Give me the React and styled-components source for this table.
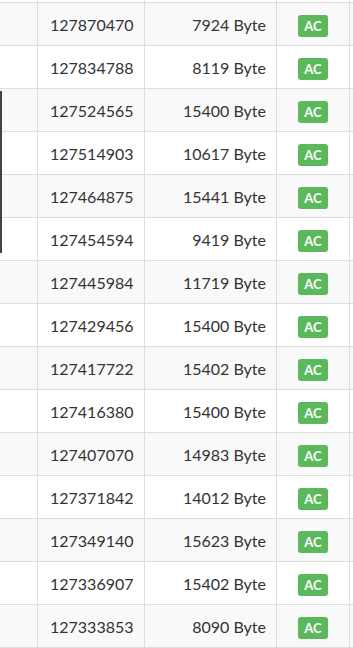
import styled, { createGlobalStyle } from "styled-components";

const GlobalStyle = createGlobalStyle`
  html, body {
    margin: 0;
    padding: 0;
    background: #fff;
  }
  body {
    font-family: Lato, "Open Sans", "Liberation Sans", sans-serif;
    color: #333;
  }
`;

const submissions = [
  null,
  { id: "127870470", size: "7924" },
  { id: "127834788", size: "8119" },
  { id: "127524565", size: "15400" },
  { id: "127514903", size: "10617" },
  { id: "127464875", size: "15441" },
  { id: "127454594", size: "9419" },
  { id: "127445984", size: "11719" },
  { id: "127429456", size: "15400" },
  { id: "127417722", size: "15402" },
  { id: "127416380", size: "15400" },
  { id: "127407070", size: "14983" },
  { id: "127371842", size: "14012" },
  { id: "127349140", size: "15623" },
  { id: "127336907", size: "15402" },
  { id: "127333853", size: "8090" },
];

export default function App() {
  return (
    <Page>
      <GlobalStyle />
      <Table>
        {submissions.map((s, i) => (
          <Row key={i} $striped={i % 2 === 1} $clipped={i === 0}>
            <Cell />
            <IdCell>{s && s.id}</IdCell>
            <SizeCell>{s && `${s.size} Byte`}</SizeCell>
            <StatusCell>{s && <Badge>AC</Badge>}</StatusCell>
            <Cell $bordered />
          </Row>
        ))}
      </Table>
      <ScrollEdge />
    </Page>
  );
}

const Page = styled.div`
  position: relative;
  width: 353px;
  height: 648px;
  overflow: hidden;
`;

const Table = styled.div`
  display: flex;
  flex-direction: column;
`;

const Row = styled.div`
  display: grid;
  grid-template-columns: 37px 107px 132px 73px 1fr;
  height: 43px;
  box-sizing: border-box;
  border-bottom: 1px solid #ddd;
  background: ${(p) => (p.$striped ? "#f9f9f9" : "#fff")};
  margin-top: ${(p) => (p.$clipped ? "-40px" : "0")};
`;

const Cell = styled.div`
  display: flex;
  align-items: center;
  box-sizing: border-box;
  font-size: 16px;
  border-left: ${(p) => (p.$bordered ? "1px solid #ddd" : "none")};
`;

const IdCell = styled(Cell)`
  border-left: 1px solid #ddd;
  padding-left: 12px;
  padding-top: 1px;
`;

const SizeCell = styled(Cell)`
  border-left: 1px solid #ddd;
  justify-content: flex-end;
  padding-right: 10px;
  padding-top: 1px;
`;

const StatusCell = styled(Cell)`
  border-left: 1px solid #ddd;
  justify-content: center;
  padding-top: 4px;
`;

const Badge = styled.span`
  display: inline-flex;
  align-items: center;
  justify-content: center;
  box-sizing: border-box;
  height: 22px;
  width: 30px;
  background: #5cb85c;
  color: #fff;
  font-weight: 700;
  font-size: 13px;
  line-height: 1;
  border-radius: 3px;
`;

const ScrollEdge = styled.div`
  position: absolute;
  left: 0;
  top: 91px;
  width: 2px;
  height: 162px;
  background: #444;
`;
